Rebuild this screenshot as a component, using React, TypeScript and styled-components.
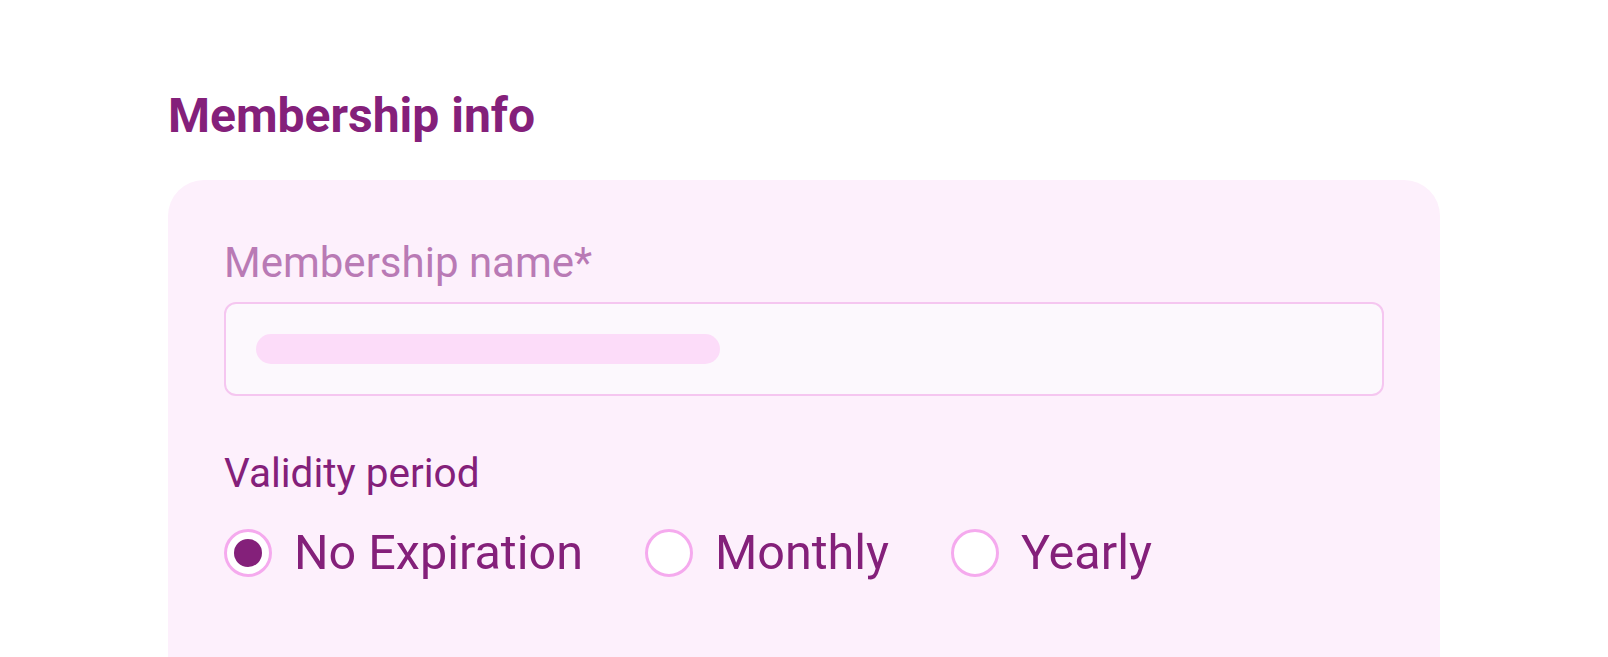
import { createGlobalStyle, styled } from 'styled-components'

const GlobalStyle = createGlobalStyle`
  html, body {
    margin: 0;
    padding: 0;
    background: #ffffff;
    overflow: hidden;
  }
  body {
    font-family: Roboto, 'Liberation Sans', sans-serif;
  }
`

const Page = styled.div`
  padding: 88px 0 0 168px;
  width: 1272px;
`

const Heading = styled.h2`
  margin: 0 0 36px;
  font-size: 48px;
  line-height: 56px;
  font-weight: 700;
  color: #84207a;
`

const Card = styled.section`
  background: #fdf0fc;
  border-radius: 36px;
  padding: 58px 56px 120px;
`

const Label = styled.label<{ $muted?: boolean }>`
  display: block;
  font-size: ${(p) => (p.$muted ? '42px' : '40.5px')};
  line-height: ${(p) => (p.$muted ? '50px' : '48px')};
  color: ${(p) => (p.$muted ? '#b97ab5' : '#84207a')};
`

const InputBox = styled.div`
  margin-top: 14px;
  height: 94px;
  box-sizing: border-box;
  border: 2px solid #f5c6f0;
  border-radius: 12px;
  background: #fcf8fd;
  display: flex;
  align-items: center;
  padding: 0 30px;
`

const Skeleton = styled.div`
  width: 464px;
  height: 30px;
  border-radius: 15px;
  background: #fcdcf9;
`

const Field = styled.div`
  margin-top: 53px;
`

const RadioRow = styled.div`
  margin-top: 28px;
  display: flex;
  align-items: center;
  gap: 62px;
`

const Option = styled.div`
  display: flex;
  align-items: center;
  gap: 22px;
  font-size: 48.5px;
  line-height: 56px;
  color: #84207a;
`

const Radio = styled.span<{ $checked?: boolean }>`
  width: 48px;
  height: 48px;
  box-sizing: border-box;
  border-radius: 50%;
  border: 3px solid #f5aaee;
  background: #ffffff;
  display: flex;
  align-items: center;
  justify-content: center;

  &::after {
    content: '';
    width: 28px;
    height: 28px;
    border-radius: 50%;
    background: ${(p) => (p.$checked ? '#84207a' : 'transparent')};
  }
`

const options = ['No Expiration', 'Monthly', 'Yearly']

export default function App() {
  return (
    <>
      <GlobalStyle />
      <Page>
        <Heading>Membership info</Heading>
        <Card>
          <Label $muted>Membership name*</Label>
          <InputBox>
            <Skeleton />
          </InputBox>
          <Field>
            <Label>Validity period</Label>
            <RadioRow>
              {options.map((o, i) => (
                <Option key={o}>
                  <Radio $checked={i === 0} />
                  {o}
                </Option>
              ))}
            </RadioRow>
          </Field>
        </Card>
      </Page>
    </>
  )
}
